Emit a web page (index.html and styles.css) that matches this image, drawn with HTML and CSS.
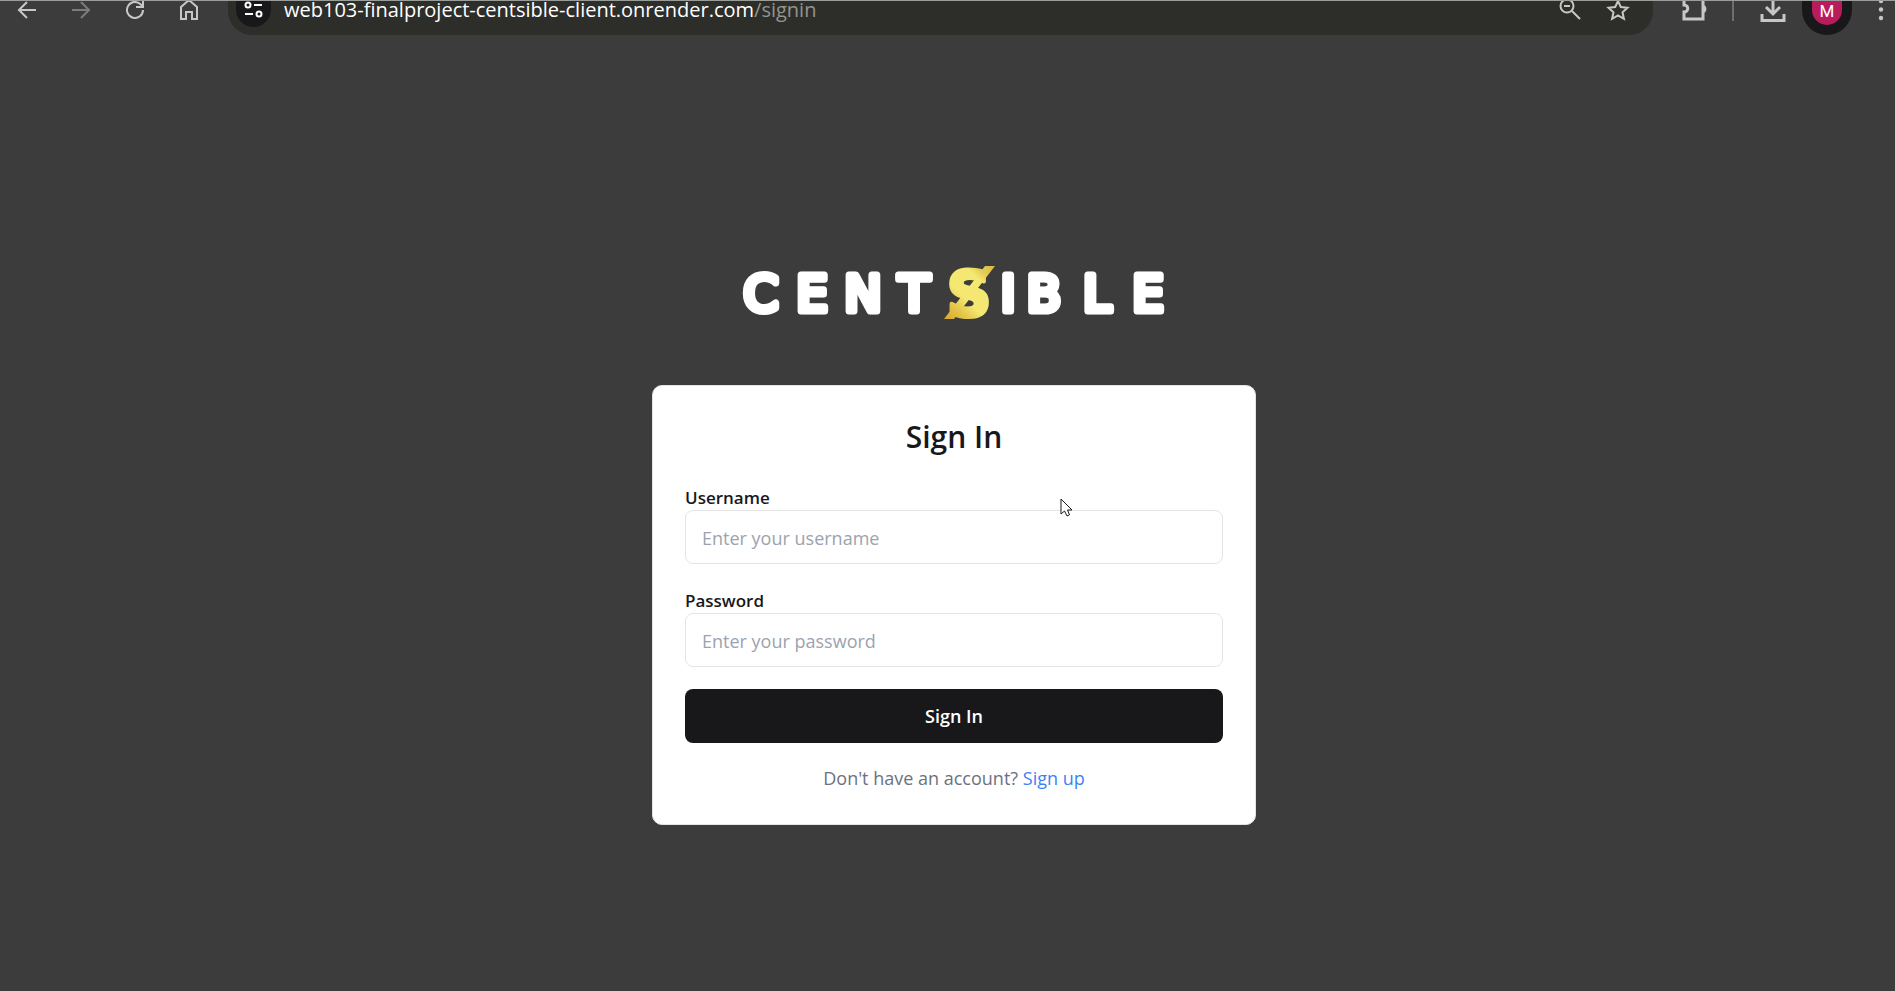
FILE: index.html
```html
<!DOCTYPE html>
<html lang="en">
<head>
<meta charset="utf-8">
<meta name="viewport" content="width=device-width, initial-scale=1">
<title>Centsible - Sign In</title>
<link rel="stylesheet" href="styles.css">
</head>
<body>
<header class="toolbar">
  <button class="tool" type="button" aria-label="Back"><svg class="icon" width="24" height="34" viewBox="0 0 24 34"><path d="M21 9H4M12 1 4 9l8 8"/></svg></button>
  <button class="tool tool-off" type="button" aria-label="Forward"><svg class="icon" width="24" height="34" viewBox="0 0 24 34"><path d="M3 9h17M12 1l8 8-8 8"/></svg></button>
  <button class="tool" type="button" aria-label="Reload"><svg class="icon" width="24" height="34" viewBox="0 0 24 34"><path d="M20 9a8 8 0 1 1-2.500-5.800L20 6M20-1v7h-7"/></svg></button>
  <button class="tool" type="button" aria-label="Home"><svg class="icon" width="24" height="34" viewBox="0 0 24 34"><path d="M4 18V6l8-7 8 7v12h-5v-7H9v7z"/></svg></button>
  <div class="address">
    <button class="site-info" type="button" aria-label="Site information"><svg class="icon icon-white" width="35" height="26" viewBox="0 0 35 26"><circle cx="12" cy="4" r="2.500"/><path d="M18 4h8M9 13h8"/><circle cx="23" cy="13" r="2.500"/></svg></button>
    <div class="url">web103-finalproject-centsible-client.onrender.com<span class="url-path">/signin</span></div>
    <button class="tool tool-in" type="button" aria-label="Zoom"><svg class="icon" width="24" height="34" viewBox="0 0 24 34"><circle cx="9" cy="5" r="6.500"/><path d="m14 10 8 8M6 5h6"/></svg></button>
    <button class="tool tool-in" type="button" aria-label="Bookmark"><svg class="icon" width="24" height="34" viewBox="0 0 24 34"><path d="m12 0 2.800 6 6.700.7-5 4.600 1.400 6.500-5.900-3.400-5.900 3.400 1.400-6.500-5-4.600 6.700-.7z"/></svg></button>
  </div>
  <button class="tool" type="button" aria-label="Extensions"><svg class="icon icon-bold" width="26" height="34" viewBox="0 0 26 34"><path d="M3-2v6c5 0 5 7 0 7v7h19V-2"/><path class="fill" d="M22 4c4.500 0 4.500 8 0 8z"/></svg></button>
  <span class="divider"></span>
  <button class="tool" type="button" aria-label="Downloads"><svg class="icon icon-bold" width="26" height="34" viewBox="0 0 26 34"><path d="M13-4v17M6 6l7 7 7-7M2 13v6.500h22V13"/></svg></button>
  <button class="profile" type="button" aria-label="Profile"><span class="avatar">M</span></button>
  <button class="tool tool-menu" type="button" aria-label="Menu"><svg class="dots" width="6" height="34" viewBox="0 0 6 34"><circle cx="3" cy="0" r="2.200"/><circle cx="3" cy="8.500" r="2.200"/><circle cx="3" cy="17" r="2.200"/></svg></button>
</header>

<main class="page">
  <svg class="logo" width="430" height="54" viewBox="0 0 430 54" role="img" aria-label="Centsible">
    <defs>
      <linearGradient id="gold" gradientUnits="userSpaceOnUse" x1="206" y1="53" x2="256" y2="1">
        <stop offset="0" stop-color="#d9a52c"/><stop offset=".25" stop-color="#e6cb50"/><stop offset=".4" stop-color="#f5e872"/><stop offset=".72" stop-color="#f5e872"/><stop offset=".82" stop-color="#e6cf58"/><stop offset="1" stop-color="#d8b840"/>
      </linearGradient>
    </defs>
    <text class="wordmark" y="45" x="22 73 124 175">CENT</text>
    <text class="coin" x="230" y="50">S</text>
    <path class="slash" d="M246 0h10l-41 53h-10z"/>
    <text class="wordmark" y="45" x="269 305 358 409">IBLE</text>
  </svg>

  <form class="card">
    <h1 class="title">Sign In</h1>
    <div class="field">
      <label class="label" for="username">Username</label>
      <input class="input" id="username" type="text" placeholder="Enter your username">
    </div>
    <div class="field">
      <label class="label" for="password">Password</label>
      <input class="input" id="password" type="password" placeholder="Enter your password">
    </div>
    <button class="submit" type="button">Sign In</button>
    <p class="signup">Don't have an account? <a class="link" href="#signup">Sign up</a></p>
    <svg class="cursor" width="14" height="20" viewBox="0 0 14 20" aria-hidden="true"><path d="M1 1v15l3.500-3 2.500 5 2.500-1.200L7.500 12H12z"/></svg>
  </form>
</main>
</body>
</html>
```
FILE: styles.css
```css
* { box-sizing: border-box; }

body {
  margin: 0;
  min-height: 100vh;
  background: #3c3c3c;
  color: #18181b;
  font-family: "Open Sans", "Noto Sans", sans-serif;
  font-size: 18px;
}

button { border: 0; padding: 0; background: none; font: inherit; cursor: pointer; }

.toolbar {
  display: flex;
  height: 35px;
  border-top: 1px solid #9a9e9a;
}

.tool { flex: none; width: 54px; height: 34px; color: #c7c7c7; }
.tool-off { color: #7c7c7c; }
.tool-in { width: 48px; }
.tool-menu { width: 29px; margin-left: 14px; }

.icon { display: block; margin: 0 auto; fill: none; stroke: currentColor; stroke-width: 2; }
.icon .fill { fill: currentColor; stroke: none; }
.icon-bold { stroke-width: 3; }
.icon-white { color: #fff; }
.dots { display: block; margin: 0 auto; fill: #c7c7c7; }

.address {
  display: flex;
  flex: 1;
  min-width: 0;
  margin: 0 14px 0 12px;
  padding: 0 11px 0 8px;
  border-radius: 0 0 24px 24px;
  background: #2d2e29;
}

.site-info {
  flex: none;
  width: 35px;
  height: 26px;
  border-radius: 0 0 18px 18px;
  background: #18181b;
}

.url {
  flex: 1;
  min-width: 0;
  margin-left: 13px;
  color: #fff;
  font-size: 20px;
  line-height: 18px;
  white-space: nowrap;
}
.url-path { color: #94948f; }

.divider { flex: none; width: 2px; height: 20px; margin: 0 12px 0 11px; background: #6e6e6e; }

.profile {
  flex: none;
  display: flex;
  justify-content: center;
  width: 50px;
  height: 34px;
  margin-left: 2px;
  border-radius: 0 0 25px 25px;
  background: #18181b;
}
.avatar {
  width: 30px;
  height: 24px;
  border-radius: 0 0 15px 15px;
  background: #b91c5c;
  color: #fff;
  font-family: Roboto, sans-serif;
  font-size: 17px;
  line-height: 20px;
}

.page {
  display: flex;
  flex-direction: column;
  align-items: center;
  padding: 231px 16px 32px 29px;
}

.logo { display: block; max-width: 100%; overflow: visible; }
.wordmark {
  fill: #fff;
  stroke: #fff;
  stroke-width: 7px;
  stroke-linejoin: round;
  font-family: "DejaVu Sans", sans-serif;
  font-size: 50px;
  text-anchor: middle;
}
.coin {
  fill: url(#gold);
  stroke: url(#gold);
  stroke-width: 4px;
  stroke-linejoin: round;
  font-family: "DejaVu Sans", sans-serif;
  font-size: 62px;
  font-weight: 700;
  text-anchor: middle;
}
.slash { fill: url(#gold); }

.card {
  position: relative;
  width: 100%;
  max-width: 604px;
  margin-top: 65px;
  padding: 32px 32px 34px;
  border: 1px solid #e4e4e7;
  border-radius: 10px;
  background: #fff;
}

.title {
  margin: 0 0 30px;
  font-size: 30px;
  font-weight: 600;
  line-height: 38px;
  text-align: center;
}

.field { margin-bottom: 25px; }
.field + .field { margin-bottom: 22px; }

.label { display: block; font-size: 17px; font-weight: 600; line-height: 24px; }

.input {
  display: block;
  width: 100%;
  height: 54px;
  padding: 1px 16px 0;
  border: 1px solid #e4e4e7;
  border-radius: 8px;
  background: #fff;
  color: #18181b;
  font: inherit;
}
.input::placeholder { color: #9ca3af; opacity: 1; }

.submit {
  display: block;
  width: 100%;
  height: 54px;
  border-radius: 8px;
  background: #18181b;
  color: #fff;
  font-size: 18px;
  font-weight: 600;
}

.signup {
  margin: 23px 0 0;
  color: #6b7280;
  line-height: 24px;
  text-align: center;
}
.link { color: #3b82f6; text-decoration: none; }

.cursor {
  position: absolute;
  top: 112px;
  left: 407px;
  fill: #fff;
  stroke: #18181b;
  stroke-width: 1;
}
```
